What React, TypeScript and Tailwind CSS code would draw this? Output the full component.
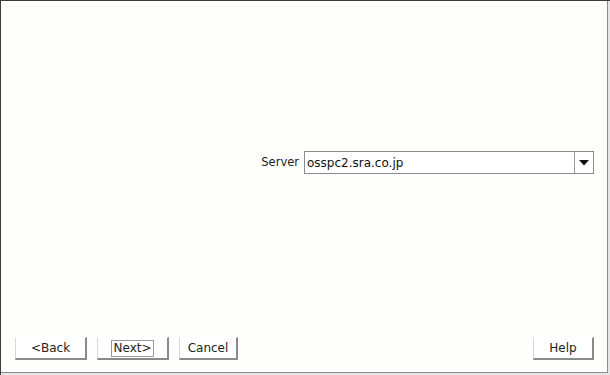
export default function App() {
  const btn =
    'h-[23px] bg-white border-l border-t border-l-[#d8d8d8] border-t-white border-r-2 border-b-2 border-r-[#8a8a8a] border-b-[#8a8a8a] text-[12px] text-[#222] flex items-center justify-center';

  return (
    <div
      className="w-[610px] h-[375px] bg-[#e6e6e6] border-l border-t border-[#3c3c3c] flex"
      style={{ fontFamily: '"DejaVu Sans", sans-serif' }}
    >
      <div className="flex-1 flex flex-col bg-[#fefefc] border-r border-b border-[#8c8c8c] mr-[2px] mb-[2px]">
        <div className="flex-1 flex items-center justify-end pr-[13px] pb-[8px]">
          <div className="flex items-center gap-[5px]">
            <span className="text-[11.5px] text-[#222]">Server</span>
            <div className="flex h-[23px] w-[290px] border border-[#8c8c8c] bg-white">
              <div className="flex-1 flex items-center pl-[2px] text-[12px] text-[#111]">
                osspc2.sra.co.jp
              </div>
              <div className="w-[19px] border-l border-[#9a9a9a] flex items-center justify-center">
                <svg width="10" height="6" viewBox="0 0 10 6">
                  <path d="M0 0 L10 0 L5 5.5 Z" fill="#111" />
                </svg>
              </div>
            </div>
          </div>
        </div>
        <div className="h-[40px] flex items-start pl-[14px] pr-[13px] pt-[5px]">
          <button className={`${btn} w-[72px]`}>&lt;Back</button>
          <button className={`${btn} w-[72px] ml-[10px]`}>
            <span className="border border-[#9a9a9a] px-[1px] leading-[15px]">Next&gt;</span>
          </button>
          <button className={`${btn} w-[59px] ml-[10px]`}>Cancel</button>
          <div className="flex-1" />
          <button className={`${btn} w-[61px]`}>Help</button>
        </div>
      </div>
    </div>
  );
}
